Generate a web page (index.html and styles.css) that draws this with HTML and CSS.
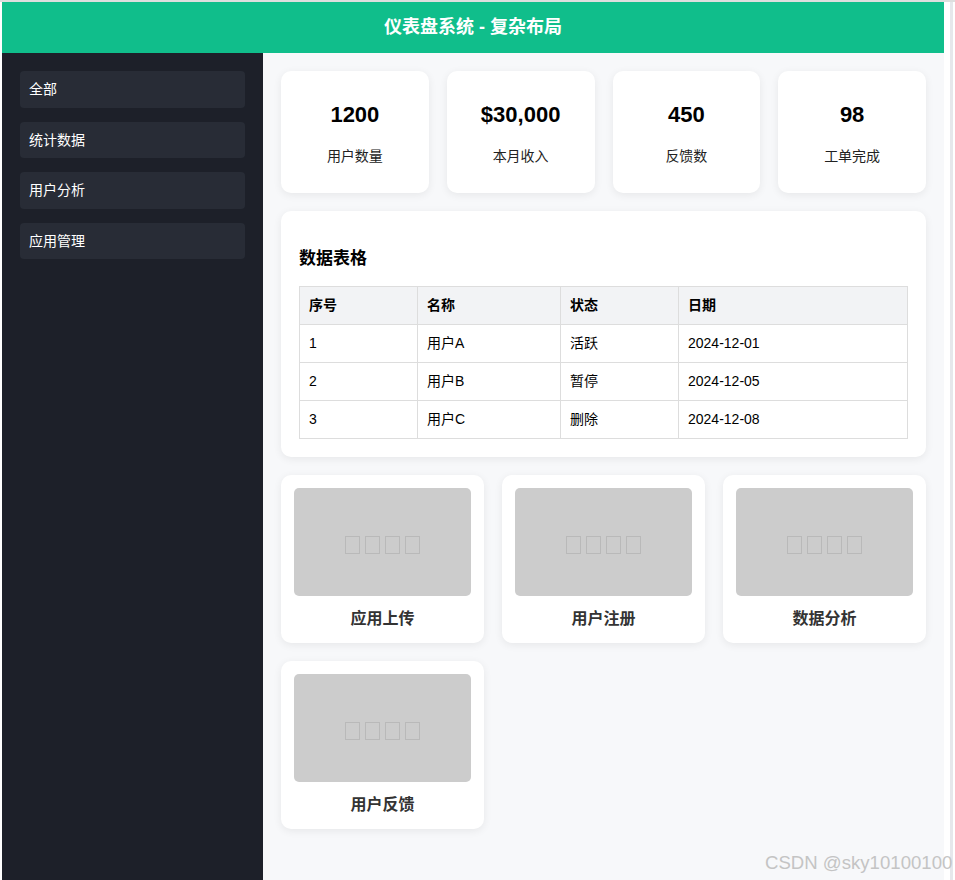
FILE: index.html
```html
<!DOCTYPE html>
<html lang="zh-CN">
<head>
    <meta charset="UTF-8">
    <meta name="viewport" content="width=device-width, initial-scale=1.0">
    <title>仪表盘系统 - 复杂布局</title>
    <link rel="stylesheet" href="styles.css">
</head>
<body>
    <div class="page">
        <header class="header">仪表盘系统 - 复杂布局</header>
        <div class="layout">
            <aside class="sidebar">
                <div class="nav-item">全部</div>
                <div class="nav-item">统计数据</div>
                <div class="nav-item">用户分析</div>
                <div class="nav-item">应用管理</div>
            </aside>
            <main class="main">
                <section class="stats">
                    <div class="stat-card">
                        <div class="stat-value">1200</div>
                        <div class="stat-label">用户数量</div>
                    </div>
                    <div class="stat-card">
                        <div class="stat-value">$30,000</div>
                        <div class="stat-label">本月收入</div>
                    </div>
                    <div class="stat-card">
                        <div class="stat-value">450</div>
                        <div class="stat-label">反馈数</div>
                    </div>
                    <div class="stat-card">
                        <div class="stat-value">98</div>
                        <div class="stat-label">工单完成</div>
                    </div>
                </section>

                <section class="table-card">
                    <h3>数据表格</h3>
                    <table>
                        <thead>
                            <tr>
                                <th class="col-id">序号</th>
                                <th class="col-name">名称</th>
                                <th class="col-status">状态</th>
                                <th>日期</th>
                            </tr>
                        </thead>
                        <tbody>
                            <tr><td>1</td><td>用户A</td><td>活跃</td><td>2024-12-01</td></tr>
                            <tr><td>2</td><td>用户B</td><td>暂停</td><td>2024-12-05</td></tr>
                            <tr><td>3</td><td>用户C</td><td>删除</td><td>2024-12-08</td></tr>
                        </tbody>
                    </table>
                </section>

                <section class="features">
                    <div class="feature-card">
                        <div class="thumb"><span class="tofu"></span><span class="tofu"></span><span class="tofu"></span><span class="tofu"></span></div>
                        <div class="feature-title">应用上传</div>
                    </div>
                    <div class="feature-card">
                        <div class="thumb"><span class="tofu"></span><span class="tofu"></span><span class="tofu"></span><span class="tofu"></span></div>
                        <div class="feature-title">用户注册</div>
                    </div>
                    <div class="feature-card">
                        <div class="thumb"><span class="tofu"></span><span class="tofu"></span><span class="tofu"></span><span class="tofu"></span></div>
                        <div class="feature-title">数据分析</div>
                    </div>
                    <div class="feature-card">
                        <div class="thumb"><span class="tofu"></span><span class="tofu"></span><span class="tofu"></span><span class="tofu"></span></div>
                        <div class="feature-title">用户反馈</div>
                    </div>
                </section>
            </main>
        </div>
    </div>
    <div class="gutter"></div>
    <div class="watermark">CSDN @sky10100100</div>
</body>
</html>
```

FILE: styles.css
```css
/* Base */
body {
    margin: 0;
    padding-left: 2px;
    border-top: 2px solid #dedede;
    background: #ffffff;
    font-family: "Liberation Sans", "Noto Sans CJK SC", sans-serif;
    color: #000000;
    display: flex;
    height: 878px;
    overflow: hidden;
    position: relative;
}

.page {
    width: 942px;
    display: flex;
    flex-direction: column;
}

.gutter {
    width: 3px;
    margin-left: 6px;
    background: #e6e7eb;
}

/* Header */
.header {
    height: 51px;
    line-height: 51px;
    background: #10be8b;
    color: #ffffff;
    font-size: 18px;
    font-weight: bold;
    text-align: center;
}

.layout {
    flex: 1;
    display: flex;
}

/* Sidebar */
.sidebar {
    width: 225px;
    padding: 18px;
    background: #1d2029;
}

.nav-item {
    background: #282c36;
    color: #ffffff;
    font-size: 14px;
    line-height: 16.6px;
    padding: 10px 9px;
    border-radius: 4px;
    margin-bottom: 14px;
}

/* Main */
.main {
    flex: 1;
    padding: 18px;
    background: #f7f8fa;
    display: flex;
    flex-direction: column;
    gap: 18px;
}

.stats {
    display: grid;
    grid-template-columns: repeat(4, 1fr);
    gap: 18px;
}

.stat-card,
.table-card,
.feature-card {
    background: #ffffff;
    border-radius: 10px;
    box-shadow: 0 2px 8px rgba(0, 0, 0, 0.07);
}

.stat-card {
    text-align: center;
    padding: 29px 0 26px;
    height: 67px;
}

.stat-value {
    font-size: 22px;
    font-weight: bold;
    line-height: 29px;
}

.stat-label {
    margin-top: 17px;
    font-size: 14px;
    line-height: 20px;
    color: #222222;
}

/* Table */
.table-card {
    padding: 18px;
}

.table-card h3 {
    margin: 18px 0 15px;
    font-size: 17px;
    line-height: 24px;
}

table {
    width: 100%;
    border-collapse: collapse;
    font-size: 14px;
}

th,
td {
    border: 1px solid #dddddd;
    padding: 10px 9px;
    line-height: 17px;
    text-align: left;
}

th {
    background: #f2f3f5;
    font-weight: bold;
}

.col-id { width: 99px; }
.col-name { width: 124px; }
.col-status { width: 99px; }

/* Feature cards */
.features {
    display: grid;
    grid-template-columns: repeat(3, 1fr);
    gap: 18px;
}

.feature-card {
    padding: 13px 13px 14px;
    text-align: center;
}

.thumb {
    height: 108px;
    background: #cccccc;
    border-radius: 5px;
    display: flex;
    justify-content: center;
    align-items: center;
    gap: 5px;
    padding-top: 6px;
    box-sizing: border-box;
}

.tofu {
    width: 15px;
    height: 18px;
    box-sizing: border-box;
    border: 1.5px solid #b9b9b9;
}

.feature-title {
    margin-top: 13px;
    font-size: 16px;
    font-weight: bold;
    line-height: 20px;
    color: #333333;
}

.watermark {
    position: absolute;
    left: 765px;
    top: 850px;
    font-size: 18.6px;
    line-height: 22px;
    color: #c4c4c4;
    white-space: nowrap;
}
```
